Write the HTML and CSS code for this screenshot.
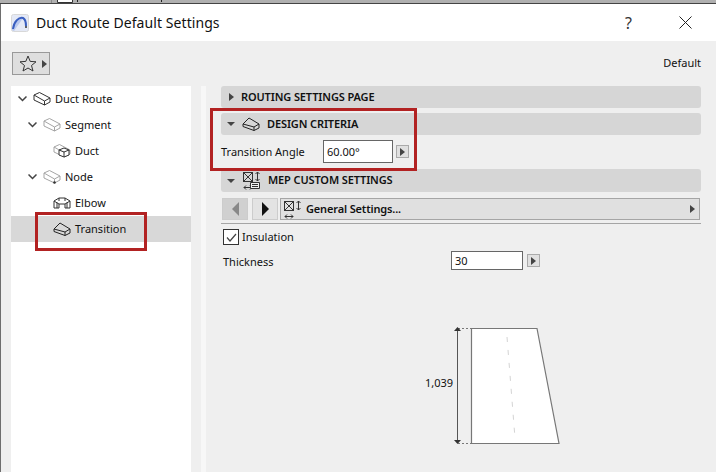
FILE: index.html
```html
<!DOCTYPE html>
<html lang="en">
<head>
    <meta charset="UTF-8">
    <title>Duct Route Default Settings</title>
    <link rel="stylesheet" href="styles.css">
</head>
<body>
    <div class="top-strip">
        <svg width="200" height="3" viewBox="0 0 200 3">
            <path d="M51.500 0 V3" stroke="#8a8a8a" fill="none"/>
            <path d="M57.500 0 V2.500 H72.500 V0" fill="#fff" stroke="#333"/>
            <path d="M77.500 0 V2 M161.500 0 V2" stroke="#222" fill="none"/>
        </svg>
    </div>
    <div class="dialog">
        <div class="titlebar">
            <svg class="app-icon" width="18" height="18" viewBox="0 0 18 18">
                <rect x="0.5" y="0.5" width="17" height="17" rx="2" fill="#e4e9f6" stroke="#d8d8d8"/>
                <path d="M1 16 C3 7 8 3 12 4 L3 17 Z" fill="#b9c8ee"/>
                <path d="M2 15 C3 7 8 3 12 4 C14 5 15 8 15 12" fill="none" stroke="#3a5fc0" stroke-width="2"/>
                <circle cx="15" cy="13" r="1" fill="#333"/>
            </svg>
            <h1>Duct Route Default Settings</h1>
            <span class="help">?</span>
            <svg class="close" width="13" height="13" viewBox="0 0 13 13">
                <path d="M0.5 0.5 L12.5 12.5 M12.5 0.5 L0.5 12.5" stroke="#222" fill="none"/>
            </svg>
        </div>

        <div class="toolbar">
            <div class="fav-btn">
                <svg width="18" height="17" viewBox="0 0 18 17">
                    <path d="M9 1 L11.2 6.4 L17 6.8 L12.5 10.5 L14 16 L9 13 L4 16 L5.5 10.5 L1 6.8 L6.8 6.4 Z" fill="none" stroke="#333"/>
                </svg>
                <span class="tri-right"></span>
            </div>
            <span class="default-label">Default</span>
        </div>

        <div class="main">
            <div class="tree">
                <div class="tree-row lvl0">
                    <svg class="chev" viewBox="0 0 9 6"><path d="M0.5 0.5 L4.5 4.5 L8.5 0.5" fill="none" stroke="#444" stroke-width="1.5"/></svg>
                    <svg class="box-icon" viewBox="0 0 18 14"><use href="#box" stroke="#333"/></svg>
                    <span class="tree-text">Duct Route</span>
                </div>
                <div class="tree-row lvl1">
                    <svg class="chev" viewBox="0 0 9 6"><path d="M0.5 0.5 L4.5 4.5 L8.5 0.5" fill="none" stroke="#444" stroke-width="1.5"/></svg>
                    <svg class="box-icon" viewBox="0 0 18 14"><use href="#box" stroke="#a5a5a5"/></svg>
                    <span class="tree-text">Segment</span>
                </div>
                <div class="tree-row lvl2">
                    <svg class="box-icon" viewBox="0 0 18 14">
                        <use href="#box" stroke="#a5a5a5"/>
                        <path d="M6 6 L11 4 L16 6 L16 11 L11 13 L6 11 Z M6 6 L11 8 L16 6 M11 8 V13" fill="#fff" stroke="#333"/>
                    </svg>
                    <span class="tree-text">Duct</span>
                </div>
                <div class="tree-row lvl1">
                    <svg class="chev" viewBox="0 0 9 6"><path d="M0.5 0.5 L4.5 4.5 L8.5 0.5" fill="none" stroke="#444" stroke-width="1.5"/></svg>
                    <svg class="box-icon" viewBox="0 0 18 14">
                        <use href="#box" stroke="#a5a5a5"/>
                        <circle cx="11.500" cy="12.500" r="1.300" fill="#333"/>
                    </svg>
                    <span class="tree-text">Node</span>
                </div>
                <div class="tree-row lvl2">
                    <svg class="box-icon" viewBox="0 0 18 14">
                        <path d="M1 5 L6 2 H12 L17 5 V12 H12 V8 H6 V12 H1 Z M1 5 L6 8 M17 5 L12 8 M6 2 V5 M12 2 V5 M4 6.500 V12 M14 6.500 V12" fill="none" stroke="#333"/>
                    </svg>
                    <span class="tree-text">Elbow</span>
                </div>
                <div class="tree-row lvl2 selected">
                    <svg class="box-icon" viewBox="0 0 18 14"><use href="#wedge"/></svg>
                    <span class="tree-text">Transition</span>
                </div>
            </div>

            <div class="gutter"></div>

            <div class="panel">
                <div class="section-head closed">
                    <span class="tri-right"></span>
                    <span class="section-title">ROUTING SETTINGS PAGE</span>
                </div>

                <div class="section-head">
                    <span class="tri-down"></span>
                    <svg class="box-icon" viewBox="0 0 18 14"><use href="#wedge"/></svg>
                    <span class="section-title">DESIGN CRITERIA</span>
                </div>
                <div class="field-row angle-row">
                    <label class="angle-label">Transition Angle</label>
                    <div class="input">60.00°</div>
                    <span class="mini-btn"><span class="tri-right"></span></span>
                </div>

                <div class="section-head tall">
                    <span class="tri-down"></span>
                    <svg width="19" height="19" viewBox="0 0 19 19">
                        <use href="#size-icon"/>
                        <path d="M8.500 11.500 H17.500 V17.500 H8.500 Z M10 13.500 H16 M10 15.500 H16" fill="#f0f0f0" stroke="#333"/>
                    </svg>
                    <span class="section-title">MEP CUSTOM SETTINGS</span>
                </div>
                <div class="nav-row">
                    <span class="nav-btn disabled"><span class="tri-left"></span></span>
                    <span class="nav-btn"><span class="tri-right big"></span></span>
                    <div class="dropdown">
                        <svg width="19" height="19" viewBox="0 0 19 19"><use href="#size-icon"/></svg>
                        <span class="dropdown-text">General Settings...</span>
                        <span class="tri-right"></span>
                    </div>
                </div>
                <div class="check-row">
                    <span class="checkbox">
                        <svg width="13" height="13" viewBox="0 0 13 13"><path d="M2 6.500 L5 10 L11 3" fill="none" stroke="#444" stroke-width="1.200"/></svg>
                    </span>
                    <span class="check-text">Insulation</span>
                </div>
                <div class="field-row thick-row">
                    <label class="thick-label">Thickness</label>
                    <div class="input">30</div>
                    <span class="mini-btn"><span class="tri-right"></span></span>
                </div>
                <div class="preview">
                    <svg width="150" height="122" viewBox="0 0 150 122">
                        <path d="M34 4.500 H47 M34 119.500 H47" stroke="#777" stroke-dasharray="2 2" fill="none"/>
                        <path d="M33.500 4 V119" stroke="#555" fill="none"/>
                        <path d="M33.500 3 L30 7 H37 Z M33.500 120 L30 116 H37 Z" fill="#333"/>
                        <path d="M47.500 4.500 H113 L135 119.500 H47.500 Z" fill="#fff" stroke="#777" stroke-width="1.200"/>
                        <path d="M83 13 L91 114" stroke="#d4d4d4" stroke-dasharray="5 8" fill="none"/>
                    </svg>
                    <span class="dim-label">1,039</span>
                </div>
            </div>
        </div>
    </div>

    <!-- red callouts drawn over the screenshot -->
    <div class="callout callout-tree"></div>
    <div class="callout callout-design"></div>

    <svg class="defs" width="0" height="0">
        <defs>
            <g id="box" fill="none">
                <path d="M1 3 L6.500 0.500 L17 6 L11.500 9 Z M1 3 V8 L11.500 13 L17 10 V6 M11.500 9 V13"/>
            </g>
            <g id="wedge" fill="none" stroke="#222">
                <path d="M1 7 L7 1 L17 7 V11 L12 13.500 L1 9.500 Z M1 7 L12 10 L17 7 M12 10 V13.500"/>
            </g>
            <g id="size-icon" fill="none" stroke="#333">
                <rect x="1.500" y="1.500" width="9" height="9"/>
                <path d="M1.500 1.500 L10.500 10.500 M10.500 1.500 L1.500 10.500"/>
                <path d="M15.500 1 V10 M13.500 3 L15.500 1 L17.500 3 M13.500 8 L15.500 10 L17.500 8"/>
                <path d="M2 16.500 H10 M4 14.500 L2 16.500 L4 18.500 M8 14.500 L10 16.500 L8 18.500"/>
            </g>
        </defs>
    </svg>
</body>
</html>
```

FILE: styles.css
```css
* {
    box-sizing: border-box;
    margin: 0;
    padding: 0;
}

body {
    width: 716px;
    height: 472px;
    overflow: hidden;
    position: relative;
    background-color: #efefef;
    color: #111;
    font-family: "Noto Sans", "Open Sans", sans-serif;
    font-size: 11px;
}

.top-strip {
    height: 4px;
    background-color: #b0b0b0;
    border-bottom: 1px solid #444;
}

.top-strip svg {
    display: block;
}

.dialog {
    height: 468px;
    border-left: 1px solid #6e6e6e;
    display: flex;
    flex-direction: column;
}

.titlebar {
    height: 37px;
    background-color: #fff;
    display: flex;
    align-items: center;
    padding-left: 10px;
}

.app-icon {
    margin-right: 7px;
}

h1 {
    font-size: 14px;
    font-weight: 400;
    letter-spacing: 0.07px;
}

.help {
    margin-left: auto;
    font-size: 16px;
    color: #333;
}

.close {
    margin: 0 24px 0 47px;
}

.toolbar {
    height: 45px;
    display: flex;
    align-items: center;
    padding: 0 15px 0 11px;
}

.fav-btn {
    width: 38px;
    height: 23px;
    border: 1px solid #999;
    background-color: #dedede;
    display: flex;
    align-items: center;
    gap: 5px;
    padding-left: 6px;
}

.default-label {
    margin-left: auto;
    margin-top: -2px;
}

.main {
    flex: 1;
    display: flex;
    padding-left: 10px;
}

.tree {
    width: 180px;
    background-color: #fff;
}

.tree-row {
    height: 26px;
    display: flex;
    align-items: center;
    gap: 4px;
}

.tree-text {
    margin-top: -2px;
}

.lvl0 {
    padding-left: 7px;
}

.lvl1 {
    padding-left: 17px;
}

.lvl2 {
    padding-left: 42px;
}

.selected {
    background-color: #d8d8d8;
}

.chev {
    width: 9px;
    height: 6px;
    margin-right: 2px;
}

.box-icon {
    width: 18px;
    height: 14px;
}

.gutter {
    width: 15px;
    border-right: 5px solid #f7f7f7;
}

.panel {
    flex: 1;
    padding: 0 15px;
}

.section-head {
    height: 22px;
    margin-bottom: 5px;
    padding-left: 6px;
    background-color: #d6d6d6;
    border-radius: 3px;
    display: flex;
    align-items: center;
    gap: 7px;
}

.section-head.closed {
    padding-left: 8px;
}

.section-head.tall {
    height: 23px;
}

.section-title {
    font-weight: 600;
    letter-spacing: -0.12px;
    margin-top: -2px;
}

.tri-right {
    display: inline-block;
    border-left: 5px solid #444;
    border-top: 4px solid transparent;
    border-bottom: 4px solid transparent;
}

.tri-right.big {
    border-left-width: 7px;
    border-top-width: 7px;
    border-bottom-width: 7px;
    border-left-color: #111;
}

.tri-left {
    display: inline-block;
    border-right: 7px solid #888;
    border-top: 7px solid transparent;
    border-bottom: 7px solid transparent;
}

.tri-down {
    display: inline-block;
    border-top: 4px solid #444;
    border-left: 4px solid transparent;
    border-right: 4px solid transparent;
}

.field-row {
    display: flex;
    align-items: center;
}

.angle-row {
    margin-top: 5px;
    margin-bottom: 6px;
}

.angle-label {
    width: 102px;
}

.thick-row {
    margin-top: 6px;
    padding-left: 2px;
}

.thick-label {
    width: 228px;
    margin-top: 2px;
}

.input {
    width: 70px;
    height: 23px;
    border: 1px solid #666;
    background-color: #fff;
    display: flex;
    align-items: center;
    padding-left: 3px;
}

.thick-row .input {
    width: 72px;
    height: 19px;
}

.mini-btn {
    width: 13px;
    height: 13px;
    margin-left: 3px;
    background-color: #e0e0e0;
    border: 1px solid #aaa;
    display: flex;
    align-items: center;
    justify-content: center;
}

.thick-row .mini-btn {
    margin-left: 4px;
}

.nav-row {
    height: 26px;
    margin-top: 6px;
    display: flex;
    gap: 3px;
    align-items: flex-start;
    border-bottom: 1px solid #a5a5a5;
    padding-left: 1px;
}

.nav-btn {
    width: 26px;
    height: 22px;
    border: 1px solid #ccc;
    background-color: #e3e3e3;
    display: flex;
    align-items: center;
    justify-content: center;
}

.nav-btn.disabled {
    background-color: #d0d0d0;
    margin-right: 1px;
}

.dropdown {
    flex: 1;
    height: 22px;
    background-color: #e0e0e0;
    border: 1px solid #a5a5a5;
    display: flex;
    align-items: center;
    padding: 0 4px 0 2px;
    gap: 4px;
    margin-left: -1px;
    margin-right: 1px;
}

.dropdown-text {
    font-weight: 600;
    letter-spacing: -0.15px;
    flex: 1;
    margin-top: -2px;
}

.check-row {
    display: flex;
    align-items: center;
    gap: 3px;
    margin-top: 5px;
    padding-left: 2px;
}

.check-text {
    margin-top: -2px;
}

.checkbox {
    width: 16px;
    height: 16px;
    border: 1px solid #333;
    background-color: #fff;
    display: flex;
    align-items: center;
    justify-content: center;
}

.preview {
    position: relative;
    margin-top: 54px;
    margin-left: 203px;
}

.dim-label {
    position: absolute;
    left: 1px;
    top: 51px;
}

.callout {
    position: absolute;
    border: 3px solid #b22222;
}

.callout-tree {
    left: 35px;
    top: 212px;
    width: 112px;
    height: 39px;
}

.callout-design {
    left: 210px;
    top: 108px;
    width: 207px;
    height: 63px;
}

.defs {
    position: absolute;
}
```
